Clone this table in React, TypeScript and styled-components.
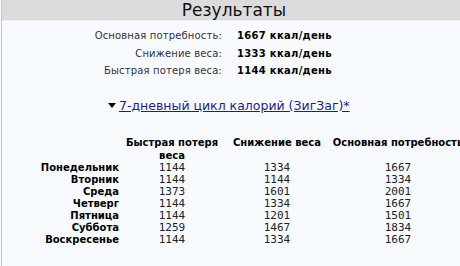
import React from "react"
import styled, { createGlobalStyle } from "styled-components"

interface DayRow {
  day: string
  fast: number
  loss: number
  base: number
}

const summary = [
  { label: "Основная потребность:", value: "1667 ккал/день" },
  { label: "Снижение веса:", value: "1333 ккал/день" },
  { label: "Быстрая потеря веса:", value: "1144 ккал/день" },
]

const week: DayRow[] = [
  { day: "Понедельник", fast: 1144, loss: 1334, base: 1667 },
  { day: "Вторник", fast: 1144, loss: 1144, base: 1334 },
  { day: "Среда", fast: 1373, loss: 1601, base: 2001 },
  { day: "Четверг", fast: 1144, loss: 1334, base: 1667 },
  { day: "Пятница", fast: 1144, loss: 1201, base: 1501 },
  { day: "Суббота", fast: 1259, loss: 1467, base: 1834 },
  { day: "Воскресенье", fast: 1144, loss: 1334, base: 1667 },
]

const GlobalStyle = createGlobalStyle`
  html, body {
    margin: 0;
    padding: 0;
    background: #f7fbff;
    overflow: hidden;
  }
  body {
    font-family: "DejaVu Sans", Verdana, sans-serif;
  }
`

const Page = styled.div`
  width: 464px;
  height: 266px;
  margin-left: 1px;
  border-left: 1px solid #c8c8c8;
  background: #f7fbff;
`

const TitleBar = styled.div`
  height: 20px;
  background: #dcdcdc;
  border-bottom: 1px solid #f0f0f0;
  display: flex;
  align-items: center;
  justify-content: center;
  font-size: 17px;
  color: #111;
  line-height: 20px;
`

const Summary = styled.div`
  display: grid;
  grid-template-columns: 220px auto;
  column-gap: 15px;
  padding-top: 6px;
  font-size: 10px;
  line-height: 17.5px;
`

const SummaryLabel = styled.div`
  text-align: right;
  color: #333;
  letter-spacing: 0.15px;
`

const SummaryValue = styled.div`
  font-weight: bold;
  color: #000;
  letter-spacing: 0.3px;
`

const Toggle = styled.div`
  display: flex;
  align-items: center;
  margin-top: 18px;
  padding-left: 106px;
  font-size: 12.5px;
  line-height: 15px;
`

const Arrow = styled.span`
  width: 0;
  height: 0;
  margin-right: 3px;
  border-left: 4.5px solid transparent;
  border-right: 4.5px solid transparent;
  border-top: 5px solid #000;
`

const ToggleLink = styled.a`
  color: #1d1d8c;
  text-decoration: underline;
  cursor: pointer;
`

const Week = styled.div`
  display: grid;
  grid-template-columns: 119px 102px 108px 134px;
  margin-top: 22px;
  font-size: 10px;
`

const HeadCell = styled.div`
  font-weight: bold;
  text-align: center;
  line-height: 13px;
  color: #000;
  padding-top: 1px;
`

const DayCell = styled.div`
  font-weight: bold;
  text-align: right;
  line-height: 12px;
  padding-right: 2px;
  color: #000;
`

const NumCell = styled.div`
  font-family: "DejaVu Sans Mono", "Liberation Mono", monospace;
  font-size: 11px;
  text-align: center;
  line-height: 12px;
  color: #222;
`

export default function App() {
  return (
    <>
      <GlobalStyle />
      <Page>
        <TitleBar>Результаты</TitleBar>
        <Summary>
          {summary.map((s) => (
            <React.Fragment key={s.label}>
              <SummaryLabel>{s.label}</SummaryLabel>
              <SummaryValue>{s.value}</SummaryValue>
            </React.Fragment>
          ))}
        </Summary>
        <Toggle>
          <Arrow />
          <ToggleLink>7-дневный цикл калорий (ЗигЗаг)*</ToggleLink>
        </Toggle>
        <Week>
          <HeadCell />
          <HeadCell>Быстрая потеря веса</HeadCell>
          <HeadCell>Снижение веса</HeadCell>
          <HeadCell>Основная потребность</HeadCell>
          {week.map((r) => (
            <React.Fragment key={r.day}>
              <DayCell>{r.day}</DayCell>
              <NumCell>{r.fast}</NumCell>
              <NumCell>{r.loss}</NumCell>
              <NumCell>{r.base}</NumCell>
            </React.Fragment>
          ))}
        </Week>
      </Page>
    </>
  )
}
